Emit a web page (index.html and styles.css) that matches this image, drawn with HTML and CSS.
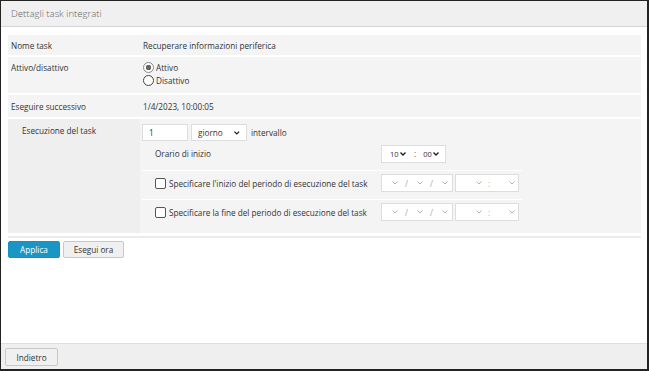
FILE: index.html
```html
<!DOCTYPE html>
<html lang="it">
<head>
    <meta charset="UTF-8">
    <meta name="viewport" content="width=device-width, initial-scale=1.0">
    <title>Dettagli task integrati</title>
    <link rel="stylesheet" href="styles.css">
</head>
<body>
    <div class="window">
        <div class="titlebar">Dettagli task integrati</div>

        <div class="content">
            <div class="rows">
                <div class="row row-name">
                    <div class="label">Nome task</div>
                    <div class="value">Recuperare informazioni periferica</div>
                </div>

                <div class="row row-state">
                    <div class="label">Attivo/disattivo</div>
                    <div class="value radios">
                        <label class="radio"><input type="radio" name="stato" checked> Attivo</label>
                        <label class="radio"><input type="radio" name="stato"> Disattivo</label>
                    </div>
                </div>

                <div class="row row-next">
                    <div class="label">Eseguire successivo</div>
                    <div class="value">1/4/2023, 10:00:05</div>
                </div>

                <div class="row row-schedule">
                    <div class="label label-indent">Esecuzione del task</div>
                    <div class="value schedule">
                        <div class="interval">
                            <input type="text" class="text-input" value="1">
                            <span class="pick pick-unit">
                                <select><option>giorno</option></select>
                                <svg class="chev" width="6" height="4" viewBox="0 0 6 4"><polyline points="0.5,0.5 3,3 5.5,0.5"/></svg>
                            </span>
                            <span>intervallo</span>
                        </div>

                        <div class="subtable">
                            <div class="subrow">
                                <div class="sublabel">Orario di inizio</div>
                                <div class="subvalue">
                                    <span class="box box-start">
                                        <span class="pick pick-num">
                                            <select><option>10</option></select>
                                            <svg class="chev" width="6" height="4" viewBox="0 0 6 4"><polyline points="0.5,0.5 3,3 5.5,0.5"/></svg>
                                        </span>
                                        <span class="sep">:</span>
                                        <span class="pick pick-num">
                                            <select><option>00</option></select>
                                            <svg class="chev" width="6" height="4" viewBox="0 0 6 4"><polyline points="0.5,0.5 3,3 5.5,0.5"/></svg>
                                        </span>
                                    </span>
                                </div>
                            </div>

                            <div class="subrow">
                                <label class="sublabel check"><input type="checkbox"> Specificare l'inizio del periodo di esecuzione del task</label>
                                <div class="subvalue">
                                    <span class="box box-date off">
                                        <span class="pick"><select disabled></select><svg class="chev" width="6" height="4" viewBox="0 0 6 4"><polyline points="0.5,0.5 3,3 5.5,0.5"/></svg></span>
                                        <span class="sep">/</span>
                                        <span class="pick"><select disabled></select><svg class="chev" width="6" height="4" viewBox="0 0 6 4"><polyline points="0.5,0.5 3,3 5.5,0.5"/></svg></span>
                                        <span class="sep">/</span>
                                        <span class="pick"><select disabled></select><svg class="chev" width="6" height="4" viewBox="0 0 6 4"><polyline points="0.5,0.5 3,3 5.5,0.5"/></svg></span>
                                    </span>
                                    <span class="box box-time off">
                                        <span class="pick"><select disabled></select><svg class="chev" width="6" height="4" viewBox="0 0 6 4"><polyline points="0.5,0.5 3,3 5.5,0.5"/></svg></span>
                                        <span class="sep">:</span>
                                        <span class="pick"><select disabled></select><svg class="chev" width="6" height="4" viewBox="0 0 6 4"><polyline points="0.5,0.5 3,3 5.5,0.5"/></svg></span>
                                    </span>
                                </div>
                            </div>

                            <div class="subrow">
                                <label class="sublabel check"><input type="checkbox"> Specificare la fine del periodo di esecuzione del task</label>
                                <div class="subvalue">
                                    <span class="box box-date off">
                                        <span class="pick"><select disabled></select><svg class="chev" width="6" height="4" viewBox="0 0 6 4"><polyline points="0.5,0.5 3,3 5.5,0.5"/></svg></span>
                                        <span class="sep">/</span>
                                        <span class="pick"><select disabled></select><svg class="chev" width="6" height="4" viewBox="0 0 6 4"><polyline points="0.5,0.5 3,3 5.5,0.5"/></svg></span>
                                        <span class="sep">/</span>
                                        <span class="pick"><select disabled></select><svg class="chev" width="6" height="4" viewBox="0 0 6 4"><polyline points="0.5,0.5 3,3 5.5,0.5"/></svg></span>
                                    </span>
                                    <span class="box box-time off">
                                        <span class="pick"><select disabled></select><svg class="chev" width="6" height="4" viewBox="0 0 6 4"><polyline points="0.5,0.5 3,3 5.5,0.5"/></svg></span>
                                        <span class="sep">:</span>
                                        <span class="pick"><select disabled></select><svg class="chev" width="6" height="4" viewBox="0 0 6 4"><polyline points="0.5,0.5 3,3 5.5,0.5"/></svg></span>
                                    </span>
                                </div>
                            </div>
                        </div>
                    </div>
                </div>
            </div>

            <div class="actions">
                <button class="btn btn-primary">Applica</button>
                <button class="btn">Esegui ora</button>
            </div>
        </div>

        <div class="footer">
            <button class="btn btn-back">Indietro</button>
        </div>
    </div>
</body>
</html>
```

FILE: styles.css
```css
* {
    box-sizing: border-box;
}
body {
    margin: 0;
    font-family: "Open Sans", sans-serif;
    font-size: 8.2px;
    color: #333;
    background: #fff;
}
.window {
    width: 649px;
    height: 371px;
    border: 1px solid #222;
    border-right-width: 2px;
    border-bottom-width: 2px;
    display: flex;
    flex-direction: column;
}
.titlebar {
    height: 26px;
    padding-left: 10px;
    display: flex;
    align-items: center;
    background: #f0f0f0;
    border-bottom: 1px solid #d4d4d4;
    font-size: 9.6px;
    font-weight: 300;
    color: #666;
}
.content {
    flex: 1;
    padding: 8px 6px 0 7px;
}
.rows {
    display: flex;
    flex-direction: column;
    gap: 2px;
}
.row {
    display: grid;
    grid-template-columns: 132px 1fr;
    background: #f4f4f4;
}
.row-name {
    height: 20px;
    align-items: center;
}
.row-state {
    height: 36px;
}
.row-next {
    height: 22px;
    align-items: center;
}
.row-schedule {
    height: 114px;
}
.label {
    padding-left: 3px;
}
.value {
    padding-left: 3px;
}
.row-state .label {
    padding-top: 5px;
}
.label-indent {
    padding: 6px 0 0 14px;
    background: #efefef;
}
.radios {
    display: flex;
    flex-direction: column;
    padding-top: 4px;
    gap: 1px;
}
.radio {
    display: flex;
    align-items: center;
    gap: 2px;
    height: 12px;
}
.radio input {
    appearance: none;
    margin: 0;
    width: 11px;
    height: 11px;
    border: 1px solid #444;
    border-radius: 50%;
    background: #fff;
}
.radio input:checked {
    border-color: #888;
    background: radial-gradient(circle, #666 0 2.6px, #fff 3px);
}
.schedule {
    padding: 5px 0 0 2px;
}
.interval {
    display: flex;
    align-items: center;
    gap: 3px;
    height: 17px;
}
.interval > span:last-child {
    margin-left: 1px;
}
.text-input {
    width: 46px;
    height: 17px;
    margin: 0;
    padding: 0 6px;
    border: 1px solid #ddd;
    background: #fff;
    font: inherit;
    color: #333;
}
.pick {
    display: inline-flex;
    align-items: center;
}
.pick select {
    appearance: none;
    margin: 0;
    padding: 0;
    border: 0;
    background: transparent;
    font: inherit;
    color: #333;
    width: 0;
    height: 14px;
}
.chev {
    fill: none;
    stroke: #222;
    stroke-width: 1.4;
}
.off .chev {
    stroke: #aaa;
    stroke-width: 0.9;
}
.pick-unit {
    width: 56px;
    height: 17px;
    padding: 0 6px;
    border: 1px solid #ddd;
    background: #fff;
}
.pick-unit select {
    width: 39px;
}
.subtable {
    width: 380px;
}
.subrow {
    display: grid;
    grid-template-columns: 239px 1fr;
    align-items: center;
    height: 29px;
    padding-bottom: 4px;
}
.subrow + .subrow {
    border-top: 1px solid #fff;
}
.sublabel {
    padding-left: 13px;
}
.check {
    display: flex;
    align-items: center;
    gap: 3px;
}
.check input {
    appearance: none;
    margin: 0;
    width: 11px;
    height: 11px;
    border: 1px solid #555;
    border-radius: 2px;
    background: #fff;
}
.subvalue {
    display: flex;
    gap: 2px;
}
.box {
    display: inline-flex;
    align-items: center;
    height: 18px;
    border: 1px solid #ddd;
    background: #fff;
}
.sep {
    color: #555;
}
.off .sep {
    color: #aaa;
}
.box-start {
    width: 65px;
    padding-left: 8px;
}
.box-start select {
    width: 9px;
    font-size: 7.5px;
}
.box-start .chev {
    margin-left: 1px;
}
.box-start .sep {
    margin: 0 7px 0 8px;
}
.box-date {
    width: 72px;
    padding-left: 10px;
}
.box-date .sep {
    margin: 0 9px 0 7px;
}
.box-time {
    width: 64px;
    padding-left: 20px;
}
.box-time .sep {
    margin: 0 19px 0 6px;
}
.actions {
    margin-top: 3px;
    padding-top: 3px;
    border-top: 2px solid #ebebeb;
    display: flex;
    gap: 3px;
}
.btn {
    height: 17px;
    padding: 0;
    border: 1px solid #c8c8c8;
    border-radius: 2px;
    background: #f0f0f0;
    font: inherit;
    color: #333;
    cursor: pointer;
}
.btn-primary {
    width: 52px;
    border-color: #1592c0;
    background: #1b96c4;
    color: #fff;
}
.actions .btn:last-child {
    width: 61px;
}
.footer {
    height: 26px;
    padding: 4px 0 0 4px;
    background: #efefef;
    border-top: 1px solid #ddd;
}
.btn-back {
    width: 53px;
    height: 18px;
}
```
